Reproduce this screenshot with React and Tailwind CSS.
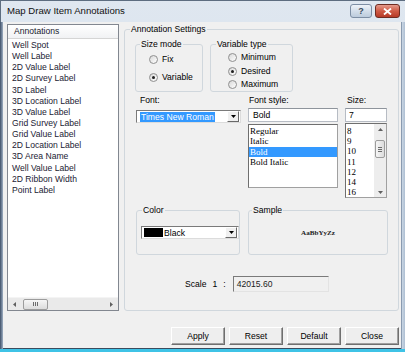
import React from "react";

const annotations = [
  "Well Spot",
  "Well Label",
  "2D Value Label",
  "2D Survey Label",
  "3D Label",
  "3D Location Label",
  "3D Value Label",
  "Grid Survey Label",
  "Grid Value Label",
  "2D Location Label",
  "3D Area Name",
  "Well Value Label",
  "2D Ribbon Width",
  "Point Label",
];

const styles = ["Regular", "Italic", "Bold", "Bold Italic"];
const sizes = ["8", "9", "10", "11", "12", "14", "16"];

function Group({ label, className = "", labelClass = "left-[5px]", children }) {
  return (
    <div className={"relative border border-[#d0d7dd] rounded-[3px] " + className}>
      <span
        className={
          "absolute -top-[6px] px-[1px] bg-[#f0f0f0] leading-[10px] whitespace-nowrap " + labelClass
        }
      >
        {label}
      </span>
      {children}
    </div>
  );
}

function Radio({ checked, label, className = "" }) {
  return (
    <div className={"flex items-center h-[9px] " + className}>
      <div className="w-[9px] h-[9px] rounded-full border border-[#8f8f8f] bg-gradient-to-br from-[#d8d8d8] to-white flex items-center justify-center">
        {checked && <div className="w-[3px] h-[3px] rounded-full bg-[#1f1f1f]" />}
      </div>
      <span className="ml-[4px] leading-[9px]">{label}</span>
    </div>
  );
}

function DropBtn() {
  return (
    <div className="w-[12px] h-[11px] flex items-center justify-center bg-[#f0f0f0] border border-t-white border-l-white border-r-[#696969] border-b-[#696969]">
      <svg width="5" height="3" viewBox="0 0 5 3">
        <path d="M0 0h5L2.5 3z" fill="#000" />
      </svg>
    </div>
  );
}

function Button({ children }) {
  return (
    <div className="w-[54px] h-[18px] flex items-center justify-center bg-[#eeeeee] border border-t-white border-l-white border-r-[#6f6f6f] border-b-[#6f6f6f] shadow-[inset_-1px_-1px_0_#a0a0a0]">
      {children}
    </div>
  );
}

export default function App() {
  return (
    <div className="w-[405px] h-[352px] overflow-hidden flex flex-col bg-gradient-to-b from-[#dfe7f0] to-[#cdd9e6] font-['Liberation_Sans',Arial,sans-serif] text-[8.6px] text-black">
      {/* Title bar */}
      <div className="h-[22px] flex items-start border-t border-l border-[#5d6d80] shrink-0">
        <div className="pl-[6px] pt-[4px] text-[9.6px] leading-[12px] text-[#111]">
          Map Draw Item Annotations
        </div>
        <div className="ml-auto flex gap-[3px] pt-[3px] pr-[5px]">
          <div className="w-[22px] h-[14px] rounded-[3px] border border-[#7d8ea4] bg-gradient-to-b from-[#eef3f8] via-[#d3deea] to-[#bccbdc] flex items-center justify-center text-[9px] leading-none text-[#3b4a5c] font-bold">
            ?
          </div>
          <div className="w-[25px] h-[14px] rounded-[3px] border border-[#6e2c22] bg-gradient-to-b from-[#e49a8c] via-[#cf5a45] to-[#b63a27] flex items-center justify-center">
            <svg width="9" height="7" viewBox="0 0 9 7">
              <path d="M1 0.5L8 6.5M8 0.5L1 6.5" stroke="#fff" strokeWidth="1.8" />
            </svg>
          </div>
        </div>
      </div>

      {/* Frame + client */}
      <div className="flex-1 flex min-h-0">
        <div className="w-[3px] bg-gradient-to-r from-[#3f5068] to-[#9fb0c4]" />
        <div className="flex-1 bg-[#f0f0f0] border-b border-[#3b4b5e] flex flex-col">
          <div className="flex pt-[2px] pl-[4px]">
            {/* Annotations list */}
            <div className="w-[112px] h-[287px] border border-[#828790] bg-white flex flex-col">
              <div className="h-[14px] bg-gradient-to-b from-white to-[#f1f2f4] border-b border-[#d5d5d5] flex items-center pl-[6px] text-[#1b1b2f]">
                Annotations
              </div>
              <div className="flex-1 pt-[1px] pl-[4px] text-[#1b1b33]">
                {annotations.map((a) => (
                  <div key={a} className="h-[11.15px] leading-[11.15px] whitespace-nowrap">
                    {a}
                  </div>
                ))}
              </div>
              <div className="h-[13px] bg-[#eaeaea] border-t border-[#f4f4f4] flex items-center">
                <div className="w-[13px] flex justify-center">
                  <svg width="3" height="5" viewBox="0 0 3 5">
                    <path d="M3 0v5L0 2.5z" fill="#606060" />
                  </svg>
                </div>
                <div className="ml-[2px] w-[25px] h-[11px] rounded-[2px] border border-[#9c9c9c] bg-gradient-to-b from-[#f6f6f6] to-[#dcdcdc] flex items-center justify-center gap-[1px]">
                  <div className="w-[1px] h-[4px] bg-[#6c6c6c]" />
                  <div className="w-[1px] h-[4px] bg-[#6c6c6c]" />
                  <div className="w-[1px] h-[4px] bg-[#6c6c6c]" />
                </div>
                <div className="ml-auto w-[13px] flex justify-center">
                  <svg width="3" height="5" viewBox="0 0 3 5">
                    <path d="M0 0v5L3 2.5z" fill="#606060" />
                  </svg>
                </div>
              </div>
            </div>

            {/* Annotation Settings */}
            <Group
              label="Annotation Settings"
              className="ml-[5px] mt-[5px] w-[275px] h-[282px] flex flex-col"
              labelClass="left-[5px]"
            >
              <div className="flex gap-[7px] ml-[10px] mt-[14px]">
                <Group label="Size mode" className="w-[68px] h-[48px] pl-[13px] pt-[10px]" labelClass="left-[4px]">
                  <Radio label="Fix" />
                  <Radio label="Variable" checked className="mt-[9px]" />
                </Group>
                <Group label="Variable type" className="w-[83px] h-[48px] pl-[17px] pt-[8px]" labelClass="left-[5px]">
                  <Radio label="Minimum" />
                  <Radio label="Desired" checked className="mt-[5px]" />
                  <Radio label="Maximum" className="mt-[4px]" />
                </Group>
              </div>

              <div className="flex ml-[11px] mt-[3px]">
                {/* Font */}
                <div className="w-[105px] flex flex-col">
                  <div className="pl-[4px] h-[10px] leading-[10px]">Font:</div>
                  <div className="mt-[5px] h-[13px] flex items-center border border-t-[#7a7a7a] border-l-[#7a7a7a] border-r-[#dcdcdc] border-b-[#dcdcdc] bg-white pl-[3px] pr-[1px]">
                    <span className="bg-[#3399ff] text-white leading-[10px] px-[1px] whitespace-nowrap">
                      Times New Roman
                    </span>
                    <div className="ml-auto">
                      <DropBtn />
                    </div>
                  </div>
                </div>
                {/* Font style */}
                <div className="ml-[7px] w-[90px] flex flex-col">
                  <div className="pl-[1px] h-[10px] leading-[10px]">Font style:</div>
                  <div className="mt-[3px] h-[14px] border border-[#b7bcc4] border-t-[#8e949c] bg-white flex items-center pl-[4px]">
                    Bold
                  </div>
                  <div className="mt-[2px] h-[64px] border border-[#a0a0a0] border-t-[#6f6f6f] border-l-[#6f6f6f] bg-white pt-[1px] font-['Liberation_Serif','Times_New_Roman',serif] text-[9px]">
                    {styles.map((s) => (
                      <div
                        key={s}
                        className={
                          "h-[10.3px] leading-[10.3px] pl-[1px] " +
                          (s === "Bold" ? "bg-[#3399ff] text-white" : "")
                        }
                      >
                        {s}
                      </div>
                    ))}
                  </div>
                </div>
                {/* Size */}
                <div className="ml-[7px] w-[42px] flex flex-col">
                  <div className="pl-[2px] h-[10px] leading-[10px]">Size:</div>
                  <div className="mt-[3px] h-[14px] border border-[#b7bcc4] border-t-[#8e949c] bg-white flex items-center pl-[3px]">
                    7
                  </div>
                  <div className="mt-[1px] h-[75px] border border-[#a0a0a0] border-t-[#6f6f6f] border-l-[#6f6f6f] bg-white flex">
                    <div className="flex-1 pt-[2px] pl-[1px] font-['Liberation_Serif','Times_New_Roman',serif] text-[9px]">
                      {sizes.map((s) => (
                        <div key={s} className="h-[10.2px] leading-[10.2px]">
                          {s}
                        </div>
                      ))}
                    </div>
                    <div className="w-[12px] bg-[#ededed] flex flex-col items-center">
                      <div className="h-[10px] flex items-center">
                        <svg width="5" height="3" viewBox="0 0 5 3">
                          <path d="M0 3h5L2.5 0z" fill="#606060" />
                        </svg>
                      </div>
                      <div className="mt-[6px] w-[10px] h-[18px] rounded-[2px] border border-[#9c9c9c] bg-gradient-to-r from-[#f6f6f6] to-[#dcdcdc] flex flex-col items-center justify-center gap-[1px]">
                        <div className="w-[4px] h-[1px] bg-[#6c6c6c]" />
                        <div className="w-[4px] h-[1px] bg-[#6c6c6c]" />
                        <div className="w-[4px] h-[1px] bg-[#6c6c6c]" />
                      </div>
                      <div className="mt-auto h-[10px] flex items-center">
                        <svg width="5" height="3" viewBox="0 0 5 3">
                          <path d="M0 0h5L2.5 3z" fill="#606060" />
                        </svg>
                      </div>
                    </div>
                  </div>
                </div>
              </div>

              <div className="flex ml-[11px] mt-[12px] gap-[8px]">
                <Group label="Color" className="w-[104px] h-[45px] pl-[4px] pt-[15px]" labelClass="left-[5px]">
                  <div className="w-[98px] h-[13px] flex items-center border border-t-[#7a7a7a] border-l-[#7a7a7a] border-r-[#dcdcdc] border-b-[#dcdcdc] bg-white pl-[2px] pr-[1px]">
                    <div className="w-[19px] h-[9px] bg-black" />
                    <span className="ml-[1px] leading-[10px]">Black</span>
                    <div className="ml-auto">
                      <DropBtn />
                    </div>
                  </div>
                </Group>
                <Group label="Sample" className="w-[140px] h-[45px] flex items-center justify-center" labelClass="left-[3px]">
                  <span className="font-['Liberation_Serif','Times_New_Roman',serif] font-bold text-[7.1px] text-[#222] mt-[1px]">
                    AaBbYyZz
                  </span>
                </Group>
              </div>

              <div className="flex items-center ml-[60px] mt-[21px]">
                <span>Scale</span>
                <span className="ml-[6px]">1</span>
                <span className="ml-[6px]">:</span>
                <div className="ml-[7px] w-[96px] h-[16px] border border-t-[#7a7a7a] border-l-[#7a7a7a] border-r-[#e3e3e3] border-b-[#e3e3e3] bg-[#f0f0f0] flex items-center pl-[3px] text-[#222]">
                  42015.60
                </div>
              </div>
            </Group>
          </div>

          <div className="flex justify-end gap-[4px] pr-[2px] mt-[16px]">
            <Button>Apply</Button>
            <Button>Reset</Button>
            <Button>Default</Button>
            <Button>Close</Button>
          </div>
        </div>
        <div className="w-[4px] border-l border-[#8a9bb0] bg-gradient-to-r from-[#c9d6e4] to-[#aebfd2]" />
      </div>
      <div className="h-[3px] bg-[#3fc3e6] shrink-0" />
    </div>
  );
}
